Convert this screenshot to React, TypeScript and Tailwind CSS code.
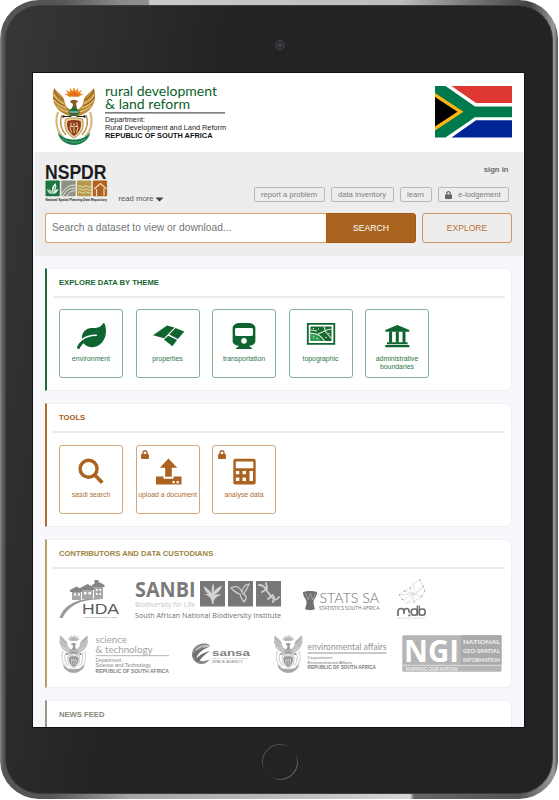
import React from "react";
import { FaLeaf, FaLock, FaTrain, FaCaretDown } from "react-icons/fa";

const arial = '"Liberation Sans", Arial, sans-serif';

type TProps = {
  x: number;
  y: number;
  w: number;
  s: number;
  f?: string;
  b?: number;
  c?: string;
  children: React.ReactNode;
};

/* Logo lettering fitted to a fixed width */
function T({ x, y, w, s, f = arial, b = 400, c, children }: TProps) {
  return (
    <text x={x} y={y} fontSize={s} fontFamily={f} fontWeight={b} fill={c} textLength={w} lengthAdjust="spacingAndGlyphs">
      {children}
    </text>
  );
}

/* South African coat of arms, drawn in a 43 x 58 box */
function Arms() {
  return (
    <g>
      <path d="M22 0l1.4 4 3-3.2-.6 4.2 4.4-2-2.4 3.4 3.8.6-4.6 2.4H17L12.400 7l3.800-.6-2.400-3.400 4.400 2-.6-4.200 3 3.200z" fill="#f08a1c" />
      <path d="M17 9.500a5 4.500 0 0 1 10 0z" fill="#e2711d" />
      <path d="M2 1C-1 11 2 20 9 25c3 2 7 4 11 5v-7c-5-2-7-4-7.500-9C12 9 6 6 2 1z" fill="#bd8a35" />
      <path d="M42 1c3 10 0 19-7 24-3 2-7 4-11 5v-7c5-2 7-4 7.500-9C32 9 38 6 42 1z" fill="#bd8a35" />
      <path d="M1.500 7c2 5 6 7 10.500 10M2 13c3 4 7 6 12 8M5 19c3 3 7 5 12 6M42.500 7c-2 5-6 7-10.500 10M42 13c-3 4-7 6-12 8M39 19c-3 3-7 5-12 6" stroke="#f2dca6" strokeWidth=".9" fill="none" />
      <path d="M2.500 3c1 5 5 8 9 10M1.500 10c3 5 7 7 11 9M41.500 3c-1 5-5 8-9 10M42.500 10c-3 5-7 7-11 9" stroke="#7d4f17" strokeWidth=".8" fill="none" />
      <path d="M18 15c1-3 7-3 8 0l-2 1 1 6h-5l1-5z" fill="#8a5a24" />
      <path d="M22 19l6 6-3 4h-6l-3-4z" fill="#177245" />
      <path d="M17.500 25h9" stroke="#fff" strokeWidth=".8" />
      <path d="M19.500 27h5" stroke="#c62c23" strokeWidth="1" />
      <path d="M11 29.500h8M25 29.500h8" stroke="#222" strokeWidth="1" />
      <circle cx="11.500" cy="29.500" r="1.300" fill="#222" />
      <circle cx="32.500" cy="29.500" r="1.300" fill="#222" />
      <path d="M6 25c-3 8-2 18 5 25M38 25c3 8 2 18-5 25" stroke="#d8b878" strokeWidth="2" fill="none" />
      <path d="M10 28c-3 7-1 15 4 20M34 28c3 7 1 15-4 20" stroke="#b98d43" strokeWidth="1.300" fill="none" />
      <path d="M13.500 32c5-1.500 12-1.500 17 0 2 8-.5 15-8.500 19-8-4-10.500-11-8.500-19z" fill="#ecd59b" stroke="#a97a35" strokeWidth=".8" />
      <path d="M15.500 34c4-1.300 9-1.300 13 0 1.400 6-.5 11-6.500 15-6-4-7.900-9-6.500-15z" fill="#8d3a1d" />
      <path d="M19 35.500v3l-1 2 1.500 5M25 35.500v3l1 2-1.500 5M22 36v10M18 39.500h3M23 39.500h3" stroke="#f0d898" strokeWidth="1" fill="none" />
      <path d="M6 45c2 4 7 6.500 11 7 3 .8 7 .8 10 0 4-.5 9-3 11-7 0 7-8 13-16 13S6 52 6 45z" fill="#16794a" />
      <path d="M10 51.500c6 5 18 5 24 0" stroke="#cfe6d2" strokeWidth=".7" strokeDasharray="1 .8" fill="none" />
    </g>
  );
}

function DepartmentLogo() {
  return (
    <svg className="block h-[60px] w-[178px] overflow-visible" viewBox="52 86 178 60">
      <g transform="translate(52 87)">
        <Arms />
      </g>
      <T x={105} y={96} w={112} s={13.6} f="Lato, sans-serif" c="#0b5f2a">rural development</T>
      <T x={105} y={109} w={85} s={13.6} f="Lato, sans-serif" c="#0b5f2a">&amp; land reform</T>
      <path d="M105 112.800h120" stroke="#555" strokeWidth="1.200" />
      <T x={105} y={121.500} w={40} s={7} c="#222">Department:</T>
      <T x={105} y={129.800} w={121} s={7} c="#222">Rural Development and Land Reform</T>
      <T x={105} y={137.800} w={107.500} s={6.900} b={700} c="#111">REPUBLIC OF SOUTH AFRICA</T>
    </svg>
  );
}

function Flag() {
  return (
    <svg className="block h-[52px] w-[78px]" viewBox="0 0 78 52">
      <path d="M0 0h77v51H0z" fill="#fff" />
      <path d="M16.500 0H77v17H41z" fill="#de3831" />
      <path d="M16.500 51.500H77V34.300H41z" fill="#002395" />
      <path d="M0 0h10.500L40 20.500h37v10.800H40L10.500 51.500H0z" fill="#007a4d" />
      <path d="M0 7l28.500 18.700L0 44.600z" fill="#ffb612" />
      <path d="M0 11l22.500 14.700L0 40.500z" fill="#000" />
    </svg>
  );
}

function NspdrLogo() {
  return (
    <svg className="block h-[40px] w-[64px] overflow-visible" viewBox="45 163 64 40">
      <T x={45} y={178.600} w={61.500} s={19.500} b={700} c="#1c1c1c">NSPDR</T>
      <rect x="45.500" y="180.500" width="14.300" height="15.700" rx="1" fill="#1e7440" />
      <rect x="61.300" y="180.500" width="14.300" height="15.700" rx="1" fill="#8e9184" />
      <rect x="77" y="180.500" width="14.300" height="15.700" rx="1" fill="#b59a4a" />
      <rect x="92.800" y="180.500" width="14.300" height="15.700" rx="1" fill="#b0611f" />
      <path d="M52.500 194c-3 0-5-2-5.500-4.500 3-.3 4.500 1 5.300 3-1-4 0-7 3.200-9.500 1.700 3 .8 6-1.500 9 1-2 2.500-3 4.500-3-1 3-3 5-6 5z" fill="#e3f1e6" />
      <path d="M52.500 194l2.500-8M48 190l4 3.500" stroke="#1e7440" strokeWidth=".6" />
      <path d="M61.500 194c3-6 8-9 14-9M63 196c3-6 7-8 12.500-8M67 196c2-4 5-5 8.500-5.500" stroke="#e8e9e2" strokeWidth="1" fill="none" />
      <path d="M78 186.500q1.600-1.600 3.200 0t3.200 0 3.200 0 3.200 0M78 189.500q1.600-1.600 3.200 0t3.200 0 3.200 0 3.200 0M78 192.500q1.600-1.600 3.200 0t3.200 0 3.200 0 3.200 0" stroke="#ece2bd" strokeWidth="1" fill="none" />
      <path d="M94 189l6.500-5.500 6 5.500M96.500 189v7M104 188.500v7" stroke="#f3dcc6" strokeWidth="1.200" fill="none" />
      <T x={45.500} y={200.800} w={61.500} s={4.200} b={700} c="#222">National Spatial Planning Data Repository</T>
    </svg>
  );
}

const iconBox = "block h-[45px] w-[62px] shrink-0";

function PropertiesIcon() {
  return (
    <svg className={iconBox} viewBox="136.500 310 62 45" fill="#0f6430">
      <path d="M152.500 335.300l14-9.700 7.500 2-10.500 10.700z" />
      <path d="M175 328l8.800 3.400-6.300 7.700-8.700-4.500z" />
      <path d="M167.800 335.700l8.800 4.400-4.800 6.200-8.300-6.700z" />
    </svg>
  );
}

function TopographicIcon() {
  return (
    <svg className={iconBox} viewBox="290 310 62 45">
      <path d="M307.800 323.800h26.500v20h-26.500z" fill="#fff" stroke="#0f6430" strokeWidth="1.800" />
      <path d="M310.500 326.500h21v14.500h-21z" fill="#17692f" />
      <path d="M310.500 334q8-1 11 7h-11z" fill="#2fa04f" />
      <path d="M310.500 333.500c7-1 11 3 14 7.500M318 334l9-4 4.500-1M324 326.500l1.500 5 6 7M311 330l6 1" stroke="#d8eedc" strokeWidth="1.100" fill="none" />
      <path d="M313 328.500h1M318 329h1M313 337h1.200M316.500 338.500h1.200M329 333v1M326 337v1" stroke="#fff" strokeWidth="1.200" />
    </svg>
  );
}

function BankIcon() {
  return (
    <svg className={iconBox} viewBox="366.500 310 62 45" fill="#0f6430">
      <path d="M385.800 330l12-5 12 5v1.800h-24z" />
      <path d="M389.600 331.500h3v11h-3zM396.300 331.500h3v11h-3zM403 331.500h3v11h-3z" />
      <path d="M387.500 342.200h20.600v2h-20.600zM385.800 345.100h24v2.100h-24z" />
    </svg>
  );
}

function SearchIcon() {
  return (
    <svg className={iconBox} viewBox="60 446 62 45" fill="none" stroke="#ac631f">
      <circle cx="88.600" cy="468.800" r="8.500" strokeWidth="3.400" />
      <path d="M95.300 475.500l7 7.300" strokeWidth="3.800" />
    </svg>
  );
}

function UploadIcon() {
  return (
    <svg className={iconBox} viewBox="136.500 446 62 45" fill="#ac631f">
      <path d="M168 458.500l8.700 9.300h-5.400v9h-6.600v-9h-5.400z" />
      <path d="M155.500 476.500h7.500v2.300h10v-2.300h8v8h-25.500z" />
      <path d="M172 481h2.200v2.200H172zM176 481h2.200v2.200H176z" fill="#fff" />
    </svg>
  );
}

function CalculatorIcon() {
  return (
    <svg className={iconBox} viewBox="213 446 62 45">
      <rect x="233.300" y="458.800" width="22.400" height="25.800" rx="2" fill="#ac631f" />
      <path d="M235.800 461.500h17.500v6.700h-17.500zM235.800 471h3.500v3.300h-3.500zM242.500 471h3.500v3.300h-3.500zM235.800 477.500h3.500v3.500h-3.500zM242.500 477.500h3.500v3.500h-3.500zM249.500 471h3.500v10h-3.500z" fill="#fff" />
    </svg>
  );
}

function Tile({ tone, label, locked, children }: { tone: "green" | "brown"; label: React.ReactNode; locked?: boolean; children: React.ReactNode }) {
  const colours = tone === "green" ? "border-[#85b096] text-[#2a7548]" : "border-[#d2a67c] text-[#b06c2e]";
  return (
    <div className={`relative flex h-[69px] w-[64px] shrink-0 flex-col items-center rounded-[3px] border bg-white ${colours}`}>
      {locked && <FaLock className="absolute left-[4.500px] top-[4px] h-[9px] w-[8px] text-[#ac631f]" />}
      {children}
      <span className="whitespace-nowrap text-center text-[6.900px] leading-[7.700px]">{label}</span>
    </div>
  );
}

function Card({ title, titleClass, barClass, sizeClass, children }: { title: string; titleClass: string; barClass: string; sizeClass: string; children?: React.ReactNode }) {
  return (
    <section className={`ml-[12px] w-[467px] shrink-0 rounded-r-[6px] border border-l-2 border-y-[#f0eff3] border-r-[#f0eff3] bg-white pl-[6px] pr-[6px] ${barClass} ${sizeClass}`}>
      <h2 className={`flex h-[27px] items-center pl-[6px] text-[7.650px] font-bold leading-none ${titleClass}`}>{title}</h2>
      <div className="h-[2px] bg-[#ebebed]" />
      {children}
    </section>
  );
}

const lato = "Lato, sans-serif";

function HdaLogo() {
  return (
    <svg className="block h-[43px] w-[61px] shrink-0 overflow-visible" viewBox="59 578 61 43">
      <path d="M70 590l6.500-3.500 6.500 3.500v2H70zM80 588l7.500-4 7.500 4v2H80zM92 585l6-3.500 6.500 3.500v2H92zM94.500 580h4v4h-4z" fill="#868686" />
      <path d="M72 592h9v8h-9zM82 590h11v9H82zM94 587h9v12h-9z" fill="#a8a8a8" />
      <path d="M74 593.500h2v2h-2zM78 593.500h2v2h-2zM84 592h2.500v2.500H84zM88.500 592H91v2.500h-2.500zM96 589h1.500v2H96zM99.500 589h1.500v2h-1.500zM96 593h1.500v2H96zM99.500 593h1.500v2h-1.500z" fill="#fff" />
      <path d="M59.500 618c4-14 22-22 42-18.500-18-1-33 5-39 18.500z" fill="#9a9a9a" />
      <T x={82} y={613.800} w={37} s={14.500} c="#5c5c5c">HDA</T>
      <T x={83} y={617.600} w={35.500} s={2.400} c="#777">HOUSING DEVELOPMENT AGENCY</T>
    </svg>
  );
}

function SanbiLogo() {
  return (
    <svg className="block h-[43px] w-[147px] shrink-0 overflow-visible" viewBox="135 578 147 43">
      <T x={135} y={597.300} w={60.500} s={21.500} f='"Open Sans", sans-serif' b={700} c="#7b7b7b">SANBI</T>
      <T x={135} y={606.700} w={60} s={7.400} f='"Open Sans", sans-serif' c="#c6c6c6">Biodiversity for Life</T>
      <T x={135} y={617.500} w={146} s={7.600} f='"Open Sans", sans-serif' b={500} c="#707070">South African National Biodiversity Institute</T>
      <path d="M200 581h25v25.500h-25zM228 581h25v25.500h-25zM256 581h25v25.500h-25z" fill="#777" />
      <path d="M212 604c0-5-2-8-8-10 4-.5 7 .5 8 3-5-3-7-6-8.500-11 4 2 7 5 8.500 8-1-4 0-7 1-11 1.500 4 1.500 7 0 10 2-4 5-6 9-7-1 4-4 6-7.500 9 3-1 5-1 7 0-4 1-8 3-8 9z" fill="#d3d3d3" />
      <path d="M231 588c5-3 9-1 11 4 1-5 3-8 7-8-2 4-3 8-6 10 4 1 4 5 1 8-2-3-4-5-4-8-3 0-6-3-9-6z" fill="none" stroke="#d3d3d3" strokeWidth="1.200" />
      <path d="M259 585c4 0 6 2 7 5l5 6c3 4 5 5 8 1M262 592l5-3M268 599l5-4M266 583l1 5M273 602l1-5" fill="none" stroke="#d0d0d0" strokeWidth="1.800" strokeLinecap="round" />
    </svg>
  );
}

function StatsLogo() {
  return (
    <svg className="block h-[43px] w-[78px] shrink-0 overflow-visible" viewBox="303 578 78 43">
      <path d="M303 592c3-1.500 11-1.500 14 0 .5 4-3.500 7-3.500 10 0 3 1 5 1.500 7-2 1.500-8 1.500-10 0 .5-2 1.500-4 1.500-7 0-3-4-6-3.500-10z" fill="#717171" />
      <path d="M305.500 593l3 7 2-7 2 7 3-7" stroke="#bbb" strokeWidth=".6" fill="none" />
      <T x={319.500} y={603.200} w={59.500} s={14} f={lato} b={300} c="#6c6c6c">STATS SA</T>
      <T x={319} y={609.500} w={60.500} s={5} f={lato} c="#777">STATISTICS SOUTH AFRICA</T>
    </svg>
  );
}

function MdbLogo() {
  return (
    <svg className="block h-[43px] w-[31px] shrink-0" viewBox="396 578 31 43">
      <path d="M399 595l5-4 6-3 4-5 6-3 3 7 2 4-3 6-8 4-7 3-4-4zM404 591l10 3 9-7M410 588l4 14M399 595l15-1 8 3M414 583l0 11M403 600l11-6M407 603l16-16" fill="none" stroke="#c8c8c8" strokeWidth=".5" />
      <path d="M399 595h1M404 591h1M410 588h1M419.500 580h1M424 591h1M414 602h1M402 599.500h1M421 596h1M423 586h1" stroke="#888" strokeWidth="1" />
      <path d="M398 616v-4.500q0-3 3-3t3 3v2.500M404 611.500q0-3 2.500-3t2.700 3v1.500M408.300 615.300h2" fill="none" stroke="#6d6d6d" strokeWidth="1.700" />
      <rect x="411.300" y="609" width="6" height="6.300" rx="2.500" fill="none" stroke="#6d6d6d" strokeWidth="1.600" />
      <rect x="419.300" y="609" width="5.800" height="6.300" rx="2.500" fill="none" stroke="#6d6d6d" strokeWidth="1.600" />
      <path d="M417.300 605.500v10M419.300 605.500v10" stroke="#6d6d6d" strokeWidth="1.300" />
      <path d="M398 618.200h28" stroke="#ccc" strokeWidth=".8" strokeDasharray="2 .7" />
    </svg>
  );
}

function GreyArms({ x }: { x: number }) {
  return (
    <g className="opacity-60 grayscale" transform={`translate(${x} 634.500) scale(.67 .66)`}>
      <Arms />
    </g>
  );
}

function ScienceLogo() {
  return (
    <svg className="block h-[43px] w-[111px] shrink-0 overflow-visible" viewBox="59 633 111 43">
      <GreyArms x={59} />
      <T x={95.500} y={642.500} w={31.500} s={9.200} f={lato} c="#a2a2a2">science</T>
      <T x={95.500} y={652.700} w={57} s={9.200} f={lato} c="#a2a2a2">&amp; technology</T>
      <path d="M95.500 655.700h73.500" stroke="#aaa" strokeWidth=".9" />
      <T x={95.500} y={661.800} w={27} s={4.600} c="#8d8d8d">Department:</T>
      <T x={95.500} y={667.300} w={55} s={4.600} c="#808080">Science and Technology</T>
      <T x={95.500} y={672.700} w={73.500} s={4.800} b={700} c="#808080">REPUBLIC OF SOUTH AFRICA</T>
    </svg>
  );
}

function SansaLogo() {
  return (
    <svg className="block h-[43px] w-[61px] shrink-0 overflow-visible" viewBox="191 633 61 43">
      <path d="M210 645c-6-3-14-1-17 5-3 7 1 13 8 14 4 0 7-2 9-5-5 3-11 3-13-1-2-6 5-11 13-13z" fill="#858585" />
      <path d="M192 656c4-6 11-9 19-10-8 3-13 7-15 12zM195 660c4-5 9-8 15-9-6 4-9 7-11 11z" fill="#6f6f6f" />
      <path d="M196 650c4-4 8-5 12-4" stroke="#c4c4c4" strokeWidth="1.500" fill="none" />
      <T x={212} y={656.300} w={38} s={8.800} b={700} c="#808080">sansa</T>
      <T x={212} y={659.200} w={37} s={2.200} c="#aaa">SOUTH AFRICAN NATIONAL</T>
      <T x={212} y={663.400} w={31} s={4} c="#777">SPACE AGENCY</T>
    </svg>
  );
}

function EnvironmentalLogo() {
  return (
    <svg className="block h-[43px] w-[115px] shrink-0 overflow-visible" viewBox="273 633 115 43">
      <GreyArms x={273.500} />
      <T x={307.500} y={649.500} w={79} s={9} f={lato} c="#939393">environmental affairs</T>
      <path d="M307.500 653h79" stroke="#888" strokeWidth=".9" />
      <T x={307.500} y={658.500} w={25.500} s={4.400} c="#808080">Department:</T>
      <T x={307.500} y={664} w={45} s={4.400} c="#777">Environmental Affairs</T>
      <T x={307.500} y={669.300} w={68.500} s={4.600} b={700} c="#777">REPUBLIC OF SOUTH AFRICA</T>
    </svg>
  );
}

function NgiLogo() {
  return (
    <svg className="block h-[43px] w-[100px] shrink-0 overflow-visible" viewBox="402 633 100 43">
      <rect x="402.300" y="635.300" width="99.200" height="36.500" rx="1.500" fill="#b5b5b5" />
      <path d="M461 635.300h40.500v30H461z" fill="#aaa" />
      <T x={404} y={662} w={55} s={31} f='"Open Sans", sans-serif' b={700} c="#fff">NGI</T>
      <path d="M402.300 665.300h99.200" stroke="#e4e4e4" strokeWidth=".9" />
      <g>
        <T x={463} y={643.600} w={37} s={6.400} f={lato} b={900} c="#ededed">NATIONAL</T>
        <T x={463} y={652.800} w={37} s={6} f={lato} b={900} c="#ededed">GEO-SPATIAL</T>
        <T x={463} y={661.800} w={37} s={6} f={lato} b={900} c="#ededed">INFORMATION</T>
      </g>
      <T x={405.500} y={670.500} w={52} s={4.600} f={lato} b={700} c="#f0f0f0">MAPPING OUR NATION</T>
    </svg>
  );
}

function NavButton({ className, children }: { className: string; children: React.ReactNode }) {
  return (
    <button className={`flex h-[15px] shrink-0 items-center justify-center whitespace-nowrap rounded-[2px] border border-[#b9b9b9] text-[7.650px] leading-none text-[#808080] ${className}`}>
      {children}
    </button>
  );
}

function Screen() {
  return (
    <main className="flex h-[654px] w-[491px] flex-col overflow-hidden bg-[#f8f7fc]">
      <header className="flex h-[79px] shrink-0 items-start justify-between bg-white pl-[19px] pr-[11px] pt-[13px]">
        <DepartmentLogo />
        <Flag />
      </header>
      <div className="mx-[1.500px] flex h-[104px] shrink-0 flex-col bg-[#ededed] pl-[10.500px] pr-[10.500px]">
        <div className="flex h-[61px] items-start pt-[11px]">
          <NspdrLogo />
          <span className="ml-[9.500px] mt-[30px] flex items-center text-[7.700px] leading-[10px] text-[#555]">
            read more
            <FaCaretDown className="ml-[1px] h-[12px] w-[9px] text-[#444]" />
          </span>
          <div className="ml-auto mr-[3.500px] flex flex-col items-end">
            <span className="mt-[3px] text-[7.700px] font-bold leading-[8px] text-[#6b6b6b]">sign in</span>
            <div className="mt-[13px] flex gap-[6px]">
              <NavButton className="w-[71px]">report a problem</NavButton>
              <NavButton className="w-[63px]">data inventory</NavButton>
              <NavButton className="w-[32px]">learn</NavButton>
              <NavButton className="w-[71px] gap-[6px]">
                <FaLock className="h-[8px] w-[7px] text-[#666]" />
                e-lodgement
              </NavButton>
            </div>
          </div>
        </div>
        <div className="flex h-[30px] w-[467px]">
          <div className="flex h-[30px] w-[281px] shrink-0 items-center whitespace-nowrap rounded-l-[3px] border border-r-0 border-[#d3a273] bg-white pl-[6px] text-[10.250px] text-[#757575]">
            Search a dataset to view or download...
          </div>
          <button className="h-[30px] w-[90px] shrink-0 rounded-r-[3px] border border-[#a4550f] bg-[#ab6420] text-[8.600px] text-white">
            <span className="font-medium">SEARCH</span>
          </button>
          <button className="ml-[6px] h-[30px] w-[90px] shrink-0 rounded-[3px] border border-[#cd935e] text-[8.600px] text-[#b87235]">EXPLORE</button>
        </div>
      </div>
      <div className="flex flex-col gap-[12px] pt-[12px]">
        <Card title="EXPLORE DATA BY THEME" titleClass="text-[#14682f]" barClass="border-l-[#1a6b3a]" sizeClass="h-[123px]">
          <div className="flex gap-[12.500px] pl-[6px] pt-[11px]">
            <Tile tone="green" label="environment">
              <div className="flex h-[45px] w-[62px] items-center justify-center pt-[7px] text-[#0f6430]">
                <FaLeaf className="h-[28px] w-[29px]" />
              </div>
            </Tile>
            <Tile tone="green" label="properties"><PropertiesIcon /></Tile>
            <Tile tone="green" label="transportation">
              <div className="flex h-[45px] w-[62px] items-center justify-center pt-[6px] text-[#0f6430]">
                <FaTrain className="h-[26px] w-[24px]" />
              </div>
            </Tile>
            <Tile tone="green" label="topographic"><TopographicIcon /></Tile>
            <Tile tone="green" label={<>administrative<br />boundaries</>}><BankIcon /></Tile>
          </div>
        </Card>
        <Card title="TOOLS" titleClass="text-[#a45a18]" barClass="border-l-[#b06c2e]" sizeClass="h-[124px]">
          <div className="flex gap-[12.500px] pl-[6px] pt-[12px]">
            <Tile tone="brown" label="sasdi search"><SearchIcon /></Tile>
            <Tile tone="brown" label="upload a document" locked><UploadIcon /></Tile>
            <Tile tone="brown" label="analyse data" locked><CalculatorIcon /></Tile>
          </div>
        </Card>
        <Card title="CONTRIBUTORS AND DATA CUSTODIANS" titleClass="text-[#9c8440]" barClass="border-l-[#b5a25f]" sizeClass="h-[149px]">
          <div className="flex pl-[6px] pt-[9px]">
            <HdaLogo />
            <div className="ml-[15px]"><SanbiLogo /></div>
            <div className="ml-[21px]"><StatsLogo /></div>
            <div className="ml-[15px]"><MdbLogo /></div>
          </div>
          <div className="flex pl-[6px] pt-[12px]">
            <ScienceLogo />
            <div className="ml-[21px]"><SansaLogo /></div>
            <div className="ml-[21px]"><EnvironmentalLogo /></div>
            <div className="ml-[14px]"><NgiLogo /></div>
          </div>
        </Card>
        <Card title="NEWS FEED" titleClass="text-[#85887a]" barClass="border-l-[#93988a]" sizeClass="h-[60px]" />
      </div>
    </main>
  );
}

export default function App() {
  return (
    <div className="h-[800px] w-[559px] overflow-hidden bg-white font-['Liberation_Sans',Arial,sans-serif]">
      <div className="h-[799px] w-[558px] rounded-[39px] bg-[linear-gradient(90deg,#8a8a8a_0px,#555_3px,#555_60px,#8a8a8a_120px,#8f8f8f_148px,#c9c9c9_150px,#bdbdbd_400px,#777_470px,#444_530px,#999_554px,#555_558px),linear-gradient(90deg,#8a8a8a_0px,#555_3px,#555_50px,#a5a5a5_130px,#bdbdbd_300px,#d5d5d5_410px,#666_414px,#555_520px,#999_554px,#555_558px)] bg-[length:100%_402px] bg-[position:top,bottom] bg-no-repeat p-[5px]">
        <div className="h-full w-full rounded-[35px] border border-[#3a3d45] bg-[linear-gradient(100deg,#373737_0px,#303030_80px,#232323_220px,#232323_100%)]">
          <div className="flex h-[67px] items-center justify-center">
            <div className="mb-[-10px] ml-[2px] flex h-[10px] w-[10px] items-center justify-center rounded-full border border-[#484848] bg-[#2b2b2e]">
              <div className="h-[4px] w-[4px] rounded-full border border-[#50576b] bg-[#22242c]" />
            </div>
          </div>
          <div className="ml-[27px] w-[491px] outline outline-1 outline-[#111]">
            <Screen />
          </div>
          <svg className="ml-[255px] mt-[16px] block h-[40px] w-[40px]" viewBox="0 0 40 40" fill="none">
            <defs>
              <linearGradient id="ring" x1="0" y1="0" x2="1" y2="1">
                <stop offset="0.1" stopColor="#666" />
                <stop offset=".45" stopColor="#262626" />
                <stop offset=".6" stopColor="#262626" />
                <stop offset=".9" stopColor="#8a8a8a" />
              </linearGradient>
            </defs>
            <circle cx="19" cy="19" r="17.500" stroke="url(#ring)" strokeWidth="1" />
          </svg>
        </div>
      </div>
    </div>
  );
}
